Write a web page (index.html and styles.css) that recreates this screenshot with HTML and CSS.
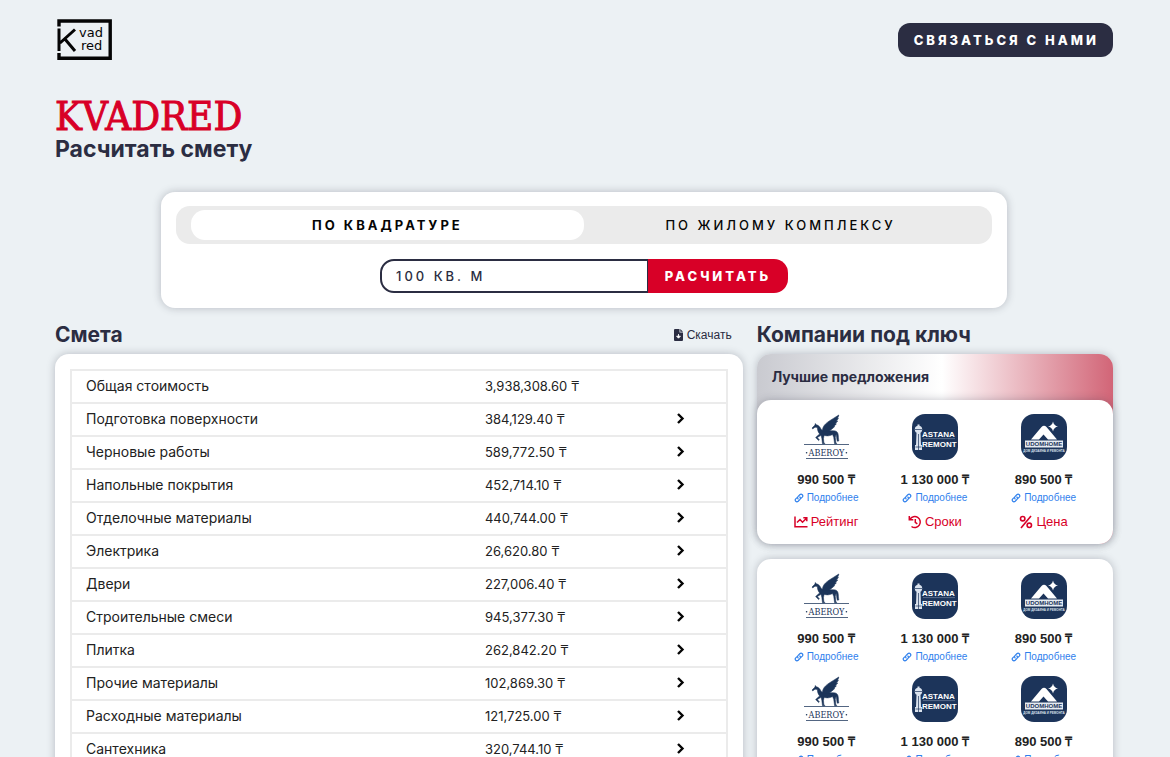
FILE: index.html
```html
<!DOCTYPE html>
<html lang="ru">
<head>
<meta charset="utf-8">
<meta name="viewport" content="width=device-width, initial-scale=1">
<title>Kvadred — Расчитать смету</title>
<link rel="stylesheet" href="styles.css">
</head>
<body>
<svg class="sprite" aria-hidden="true">
  <symbol id="chevron" viewBox="0 0 10 14"><path d="M2 2l4.500 4.500L2 11" fill="none" stroke="currentColor" stroke-width="2.400"/></symbol>
  <symbol id="link" viewBox="0 0 12 12"><g fill="none" stroke="currentColor" stroke-width="1.400" stroke-linecap="round"><path d="M5 7.200C3.800 6 4.200 4.900 5 4.100l2-2c2-1.900 4.800.9 2.900 2.900L8.700 6.200"/><path d="M7 4.800c1.200 1.200.8 2.300 0 3.100l-2 2C3 11.800.2 9 2.100 7l1.200-1.200"/></g></symbol>
  <symbol id="aberoy" viewBox="0 0 46 46">
    <g fill="#1b3459">
      <path stroke="#1b3459" stroke-width=".5" d="M9 14l3-3 .2-1.500 1.300 1.300c2 .5 3.500 2 4.500 4.200 1 1.500 2.500 1.700 5 1.700h7.500c2.500 0 4 1 4.500 3 .7 2.500.2 5 .8 7.300l-1.500.2c-.8-2-.5-5-1.200-7l-.8 3 .6 6h.8v.6h-2.100l-.9-6.500-1.200-2.800c-3 1.600-5.400 1.700-8.400.9l-.6 3.200.4 4.600h.9v.6h-2.300l-.7-5.500-.8-3-3.600 2.200 2 2.400-.8.700-3-3.100 4-3.600c-1.400-1.600-2.200-3.900-2.300-6.500l-2.300-.2-2.300 1.700z"/>
      <path stroke="#1b3459" stroke-width=".6" d="M19.500 17c0-5 3-7.300 6.500-9.800 3-2 6.500-4 9.800-6.200-.3 1.700-.9 2.700-1.700 3.600l1.300-.3-2.100 3 1.400-.2-2.500 2.700 1.200.1-2.700 2.500 1 .2c-1.800 1.800-3.700 3-5.600 4.600z"/>
      <path d="M1 30.200h45v.8H1zM3 44.300h42v.8H3z"/>
      <circle cx="3.600" cy="38.700" r=".8"/><circle cx="43.400" cy="38.700" r=".8"/>
    </g>
    <text x="23.500" y="42" text-anchor="middle" class="logo-serif">ABEROY</text>
  </symbol>
  <symbol id="astana" viewBox="0 0 46 46">
    <rect width="46" height="46" rx="13" fill="#1c345a"/>
    <g fill="#dbe3ee"><circle cx="6.500" cy="15.500" r="3.700"/><path d="M5.500 10.500h2V13h-2zM4.500 19h4l.5 12H4zM3 31h7v5H3z"/></g>
    <path d="M3 15.500h7M6.500 20v16M3.500 33h6" stroke="#1c345a" stroke-width=".7"/>
    <path d="M11 24.600h32" stroke="#71839f" stroke-width=".7"/>
    <text x="10" y="23" class="logo-sans">ASTANA</text>
    <text x="10" y="33" class="logo-sans">REMONT</text>
  </symbol>
  <symbol id="udomhome" viewBox="0 0 46 46">
    <rect width="46" height="46" rx="13" fill="#1c345a"/>
    <path d="M10 25.500L20.500 13q2.500-2.500 5 0L36 25.500h-9L22.500 20.500 18 25.500zM32 7.500q.8 4.200 5 5-4.200.8-5 5-.8-4.200-5-5 4.200-.8 5-5z" fill="#fff"/>
    <path d="M4 26.500h38v7H4z" fill="#e6ebf2"/>
    <text x="23" y="32.300" text-anchor="middle" class="logo-home">UDOMHOME</text>
    <text x="23" y="37.500" text-anchor="middle" class="logo-tag">ДОМ ДИЗАЙНА И РЕМОНТА</text>
  </symbol>
</svg>

<div class="page">
  <header class="header">
    <a href="#" aria-label="Kvadred">
      <svg class="brand" viewBox="0 0 56 42" aria-hidden="true">
        <path d="M2 7.500V2h51.200v37.300H2V34" fill="none" stroke="#050505" stroke-width="3.400"/>
        <path d="M2 9.500v22.500M18 10.500L3 24M7.500 19.500L18 32" fill="none" stroke="#050505" stroke-width="3"/>
        <text x="22" y="18" class="brand-text">vad</text>
        <text x="24" y="31" class="brand-text">red</text>
      </svg>
    </a>
    <button class="contact" type="button">Связаться с нами</button>
  </header>

  <main>
    <h1 class="title">KVADRED</h1>
    <p class="subtitle">Расчитать смету</p>

    <section class="card calculator">
      <div class="tabs">
        <button class="tab tab-active" type="button">По квадратуре</button>
        <button class="tab" type="button">По жилому комплексу</button>
      </div>
      <form class="calc-form">
        <input class="area" type="text" value="100 КВ. М" aria-label="Площадь">
        <button class="submit" type="button">Расчитать</button>
      </form>
    </section>

    <div class="columns">
      <section class="estimate">
        <div class="section-head">
          <h2 class="heading">Смета</h2>
          <a class="download" href="#"><svg class="download-icon" viewBox="0 0 9 12" aria-hidden="true"><path d="M1 0h4.500v3.500H9V11q0 1-1 1H1q-1 0-1-1V1q0-1 1-1zM6.300 0L9 2.800H6.300z" fill="currentColor"/><path d="M4.500 5v3M2.600 7.200l1.900 2L6.400 7.200z" fill="#fff" stroke="#fff" stroke-width=".9"/></svg>Скачать</a>
        </div>
        <div class="card table-card">
          <table class="table">
            <tbody>
              <tr><td class="name">Общая стоимость</td><td>3,938,308.60 ₸</td><td class="more"></td></tr>
              <tr><td class="name">Подготовка поверхности</td><td>384,129.40 ₸</td><td class="more"><button class="open" type="button" aria-label="Открыть"><svg class="chevron"><use href="#chevron"/></svg></button></td></tr>
              <tr><td class="name">Черновые работы</td><td>589,772.50 ₸</td><td class="more"><button class="open" type="button" aria-label="Открыть"><svg class="chevron"><use href="#chevron"/></svg></button></td></tr>
              <tr><td class="name">Напольные покрытия</td><td>452,714.10 ₸</td><td class="more"><button class="open" type="button" aria-label="Открыть"><svg class="chevron"><use href="#chevron"/></svg></button></td></tr>
              <tr><td class="name">Отделочные материалы</td><td>440,744.00 ₸</td><td class="more"><button class="open" type="button" aria-label="Открыть"><svg class="chevron"><use href="#chevron"/></svg></button></td></tr>
              <tr><td class="name">Электрика</td><td>26,620.80 ₸</td><td class="more"><button class="open" type="button" aria-label="Открыть"><svg class="chevron"><use href="#chevron"/></svg></button></td></tr>
              <tr><td class="name">Двери</td><td>227,006.40 ₸</td><td class="more"><button class="open" type="button" aria-label="Открыть"><svg class="chevron"><use href="#chevron"/></svg></button></td></tr>
              <tr><td class="name">Строительные смеси</td><td>945,377.30 ₸</td><td class="more"><button class="open" type="button" aria-label="Открыть"><svg class="chevron"><use href="#chevron"/></svg></button></td></tr>
              <tr><td class="name">Плитка</td><td>262,842.20 ₸</td><td class="more"><button class="open" type="button" aria-label="Открыть"><svg class="chevron"><use href="#chevron"/></svg></button></td></tr>
              <tr><td class="name">Прочие материалы</td><td>102,869.30 ₸</td><td class="more"><button class="open" type="button" aria-label="Открыть"><svg class="chevron"><use href="#chevron"/></svg></button></td></tr>
              <tr><td class="name">Расходные материалы</td><td>121,725.00 ₸</td><td class="more"><button class="open" type="button" aria-label="Открыть"><svg class="chevron"><use href="#chevron"/></svg></button></td></tr>
              <tr><td class="name">Сантехника</td><td>320,744.10 ₸</td><td class="more"><button class="open" type="button" aria-label="Открыть"><svg class="chevron"><use href="#chevron"/></svg></button></td></tr>
            </tbody>
          </table>
        </div>
      </section>

      <section class="companies">
        <div class="section-head"><h2 class="heading">Компании под ключ</h2></div>
        <div class="best">
          <h3 class="best-title">Лучшие предложения</h3>
          <div class="card offers">
            <article class="offer"><svg class="logo"><use href="#aberoy"/></svg><strong class="price">990 500 ₸</strong><a class="details" href="#"><svg class="link-icon"><use href="#link"/></svg>Подробнее</a>
              <span class="tag"><svg class="tag-icon" viewBox="0 0 14 14" aria-hidden="true"><path d="M1 1.500v10.300h12.500M3 7.500l3-3 2.500 2.700 4-4M9.300 2.800h3.500v3.500" fill="none" stroke="currentColor" stroke-width="1.500"/></svg>Рейтинг</span></article>
            <article class="offer"><svg class="logo"><use href="#astana"/></svg><strong class="price">1 130 000 ₸</strong><a class="details" href="#"><svg class="link-icon"><use href="#link"/></svg>Подробнее</a>
              <span class="tag"><svg class="tag-icon" viewBox="0 0 14 14" aria-hidden="true"><path d="M2 4.300A5.500 5.500 0 1 1 3.500 11.500M1.300 1v3.800h4M7.300 4v3.300l2 1.500" fill="none" stroke="currentColor" stroke-width="1.500"/></svg>Сроки</span></article>
            <article class="offer"><svg class="logo"><use href="#udomhome"/></svg><strong class="price">890 500 ₸</strong><a class="details" href="#"><svg class="link-icon"><use href="#link"/></svg>Подробнее</a>
              <span class="tag"><svg class="tag-icon" viewBox="0 0 14 14" aria-hidden="true"><g fill="none" stroke="currentColor" stroke-width="1.600"><path d="M12 1L2 13"/><circle cx="3.700" cy="3.700" r="2.200"/><circle cx="10.300" cy="10.300" r="2.200"/></g></svg>Цена</span></article>
          </div>
        </div>
        <div class="card offers">
          <article class="offer"><svg class="logo"><use href="#aberoy"/></svg><strong class="price">990 500 ₸</strong><a class="details" href="#"><svg class="link-icon"><use href="#link"/></svg>Подробнее</a></article>
          <article class="offer"><svg class="logo"><use href="#astana"/></svg><strong class="price">1 130 000 ₸</strong><a class="details" href="#"><svg class="link-icon"><use href="#link"/></svg>Подробнее</a></article>
          <article class="offer"><svg class="logo"><use href="#udomhome"/></svg><strong class="price">890 500 ₸</strong><a class="details" href="#"><svg class="link-icon"><use href="#link"/></svg>Подробнее</a></article>
          <article class="offer"><svg class="logo"><use href="#aberoy"/></svg><strong class="price">990 500 ₸</strong><a class="details" href="#"><svg class="link-icon"><use href="#link"/></svg>Подробнее</a></article>
          <article class="offer"><svg class="logo"><use href="#astana"/></svg><strong class="price">1 130 000 ₸</strong><a class="details" href="#"><svg class="link-icon"><use href="#link"/></svg>Подробнее</a></article>
          <article class="offer"><svg class="logo"><use href="#udomhome"/></svg><strong class="price">890 500 ₸</strong><a class="details" href="#"><svg class="link-icon"><use href="#link"/></svg>Подробнее</a></article>
        </div>
      </section>
    </div>
  </main>
</div>
</body>
</html>
```
FILE: styles.css
```css
* { box-sizing: border-box; }
body {
  margin: 0;
  background: #ecf1f4;
  color: #2b2d42;
  font-family: Inter, "Noto Sans", sans-serif;
}
h1, h2, h3, p { margin: 0; }
button, input { font: inherit; }
button { cursor: pointer; }
a { text-decoration: none; }
.sprite { display: none; }

.page { padding: 0 57px 0 55px; }
.header {
  display: flex;
  justify-content: space-between;
  align-items: center;
  height: 80px;
}
.brand { display: block; width: 56px; height: 42px; margin-left: 2px; }
.brand-text { font: 13px "DejaVu Sans", sans-serif; fill: #050505; }
.contact, .submit {
  border: 0;
  color: #fff;
  font-size: 13px;
  font-weight: 800;
  letter-spacing: 3px;
  text-transform: uppercase;
  white-space: nowrap;
}
.contact { height: 34px; padding: 0 14px 0 16px; border-radius: 12px; background: #2b2d42; }

.title {
  padding-top: 13px;
  color: #d80027;
  font: 400 40px/46px "DejaVu Serif Condensed", "DejaVu Serif", serif;
  -webkit-text-stroke: 1px #d80027;
}
.subtitle { font-size: 23px; line-height: 20px; font-weight: 700; }

.card { background: #fff; border-radius: 14px; box-shadow: 0 0 8px rgba(43, 45, 66, .28); }
.calculator { width: 80%; margin: 33px auto 0; padding: 14px 15px 15px; }
.tabs {
  display: grid;
  grid-template-columns: 1fr 1fr;
  height: 38px;
  padding: 4px 15px;
  border-radius: 14px;
  background: #ebebeb;
}
.tab {
  border: 0;
  border-radius: 14px;
  background: none;
  color: #050505;
  font-size: 13px;
  font-weight: 500;
  letter-spacing: 3px;
  text-transform: uppercase;
}
.tab-active { background: #fff; font-weight: 700; }
.calc-form { display: flex; justify-content: center; margin-top: 15px; }
.area {
  width: 268px;
  height: 34px;
  padding: 0 14px;
  border: 2px solid #2b2d42;
  border-right-width: 1px;
  border-radius: 14px 0 0 14px;
  background: #fff;
  color: #2b2d42;
  font-size: 13px;
  font-weight: 500;
  letter-spacing: 3px;
}
.submit { width: 140px; height: 34px; padding: 0; border-radius: 0 14px 14px 0; background: #d80027; }

.columns { display: flex; gap: 14px; margin-top: 14px; padding-bottom: 16px; }
.estimate { flex: 0 0 65%; }
.companies { flex: 1; min-width: 0; }
.section-head {
  display: flex;
  justify-content: space-between;
  align-items: center;
  height: 32px;
  padding-bottom: 6px;
}
.heading { font-size: 21px; line-height: 26px; font-weight: 700; }
.download {
  display: flex;
  align-items: center;
  gap: 4px;
  padding-right: 11px;
  color: #2b2d42;
  font: 12px "Liberation Sans", sans-serif;
}
.download-icon { width: 9px; height: 12px; }

.table-card { padding: 15px; }
.table {
  width: 100%;
  border-collapse: collapse;
  table-layout: fixed;
  border: 2px solid #ebebeb;
  color: #222;
  font-size: 13px;
}
.table td { height: 33px; padding: 0 0 2px 14px; border-bottom: 2px solid #ebebeb; }
.table .name { width: 61%; font-size: 14px; }
.table .more { width: 14%; padding-left: 41px; }
.open { display: block; padding: 0; border: 0; background: none; color: #050505; }
.chevron { display: block; width: 10px; height: 14px; }

.best {
  margin-bottom: 15px;
  border-radius: 14px;
  background: linear-gradient(90deg, #c9cad0, #fff 52%, #d26577);
  box-shadow: 0 0 8px rgba(43, 45, 66, .28);
}
.best-title { padding: 12px 15px 12px; font-size: 14px; line-height: 22px; font-weight: 700; }
.offers { display: grid; grid-template-columns: repeat(3, 1fr); row-gap: 11px; padding: 14px 15px; }
.offer {
  display: flex;
  flex-direction: column;
  align-items: center;
  font-family: "Liberation Sans", sans-serif;
}
.logo { width: 46px; height: 46px; margin-bottom: 10px; }
.logo-serif { font: 9px "DejaVu Serif Condensed", serif; fill: #1b3459; }
.logo-sans { font: 700 8px "Liberation Sans", sans-serif; fill: #fff; }
.logo-home { font: 700 6px "Liberation Sans", sans-serif; fill: #1c345a; }
.logo-tag { font: 700 3px "Liberation Sans", sans-serif; fill: #dbe3ee; }
.price { color: #222; font-size: 13px; line-height: 20px; }
.details {
  display: flex;
  align-items: center;
  gap: 3px;
  color: #2f80ed;
  font-size: 10px;
  line-height: 16px;
}
.link-icon { width: 10px; height: 10px; }
.tag {
  display: flex;
  align-items: center;
  gap: 3px;
  margin-top: 7px;
  color: #d80027;
  font-size: 13px;
  line-height: 17px;
}
.tag-icon { width: 14px; height: 14px; }
```
